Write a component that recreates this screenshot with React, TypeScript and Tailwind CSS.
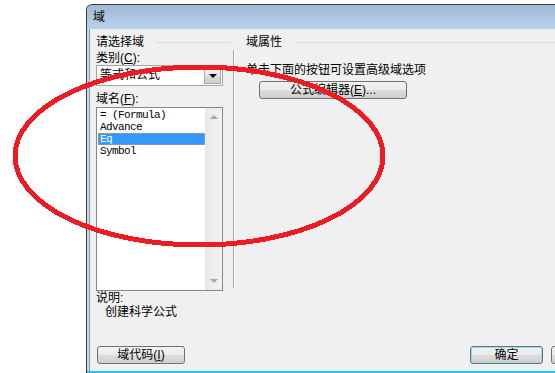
import React from "react";

const btn =
  "shrink-0 h-[18px] rounded-[3px] border border-[#707070] bg-[linear-gradient(#f2f2f2,#ebebeb_50%,#dddddd_50%,#cfcfcf)] flex items-center justify-center text-[12px] leading-none text-black";

const items = ["= (Formula)", "Advance", "Eq", "Symbol"];

export default function App() {
  return (
    <div className="relative w-[555px] h-[373px] overflow-hidden bg-white flex font-['Liberation_Sans','Noto_Sans_CJK_SC',sans-serif] text-[12px] text-black">
      <div className="w-[86px] shrink-0" />

      {/* dialog window */}
      <div className="mt-[4px] w-[500px] shrink-0 flex flex-col border-l border-t border-[#3a3a3a] rounded-tl-[6px] bg-[#c4d8ee] overflow-hidden">
        <div className="h-[24px] shrink-0 flex items-center pl-[6px] bg-[linear-gradient(#a2b8d3,#bad1eb)] leading-none">
          域
        </div>

        <div className="flex-1 ml-[2px] border-l border-[#8a9db4] bg-[#f0f0f0] flex flex-col">
          <div className="flex">
            {/* left column */}
            <div className="w-[143px] shrink-0 pl-[6px] pt-[6px]">
              <div className="h-[14px] flex items-center">
                <span className="leading-[14px]">请选择域</span>
                <div className="flex-1 ml-[12px] mr-[2px] h-px bg-[#d5dee7]" />
              </div>
              <div className="mt-[2px] h-[14px] leading-[14px]">
                类别(<span className="underline">C</span>):
              </div>
              <div className="h-[21px] w-[127px] border border-[#a5a5a5] bg-white flex">
                <div className="flex-1 pl-[3px] leading-[19px]">等式和公式</div>
                <div className="w-[17px] m-[1px] border border-[#a8a8a8] bg-[linear-gradient(#f2f2f2,#ebebeb_50%,#dddddd_50%,#cfcfcf)] flex items-center justify-center">
                  <div className="w-0 h-0 border-l-[4px] border-r-[4px] border-t-[4px] border-l-transparent border-r-transparent border-t-black" />
                </div>
              </div>
              <div className="mt-[6px] h-[14px] leading-[14px]">
                域名(<span className="underline">F</span>):
              </div>
              <div className="mt-[1px] h-[184px] w-[127px] border border-[#828790] bg-white flex">
                <div className="flex-1 pt-[1px] pl-[1px] font-['Liberation_Mono',monospace] text-[11px] tracking-[-0.6px]">
                  {items.map((it) =>
                    it === "Eq" ? (
                      <div
                        key={it}
                        className="h-[12px] leading-[10px] pl-[1px] bg-[#3399ff] text-white border border-dotted border-[#d19a4a]"
                      >
                        {it}
                      </div>
                    ) : (
                      <div key={it} className="h-[12px] leading-[12px] pl-[2px]">
                        {it}
                      </div>
                    )
                  )}
                </div>
                <div className="w-[17px] bg-[linear-gradient(90deg,#e8e8e8,#f2f2f2)] flex flex-col justify-between items-center py-[7px]">
                  <div className="w-0 h-0 border-l-[4px] border-r-[4px] border-b-[4px] border-l-transparent border-r-transparent border-b-[#a6a6a6]" />
                  <div className="w-0 h-0 border-l-[4px] border-r-[4px] border-t-[4px] border-l-transparent border-r-transparent border-t-[#a6a6a6]" />
                </div>
              </div>
            </div>

            {/* separator */}
            <div className="mt-[21px] h-[238px] w-[2px] shrink-0 border-l border-[#a0a0a0] bg-white" />

            {/* right column */}
            <div className="flex-1 pl-[11px] pt-[6px]">
              <div className="h-[14px] flex items-center">
                <span className="leading-[14px]">域属性</span>
                <div className="flex-1 ml-[12px] h-px bg-[#d5dee7]" />
              </div>
              <div className="mt-[14px] h-[14px] leading-[14px]">单击下面的按钮可设置高级域选项</div>
              <div className={`mt-[4px] ml-[13px] w-[148px] ${btn}`}>
                公式编辑器(<span className="underline">E</span>)...
              </div>
            </div>
          </div>

          <div className="pl-[6px] leading-[14px]">
            <div>说明:</div>
            <div className="pl-[9px]">创建科学公式</div>
          </div>

          <div className="mt-[27px] pl-[7px] flex">
            <div className={`w-[88px] ${btn}`}>
              域代码(<span className="underline">I</span>)
            </div>
            <div className={`ml-[285px] w-[73px] ${btn} border-[#3c9fd6] shadow-[inset_0_0_0_1px_#93dcf7]`}>确定</div>
            <div className={`ml-[8px] w-[73px] ${btn}`} />
          </div>
          <div className="flex-1" />
        </div>
        <div className="h-[2px] shrink-0 bg-[#30c0ec]" />
      </div>

      {/* red annotation ellipse */}
      <svg
        className="absolute inset-0 pointer-events-none"
        width="555"
        height="373"
        viewBox="0 0 555 373"
      >
        <ellipse
          cx="199"
          cy="156"
          rx="184"
          ry="89"
          fill="none"
          stroke="#ed1c24"
          strokeWidth="5"
          shapeRendering="crispEdges"
        />
      </svg>
    </div>
  );
}
